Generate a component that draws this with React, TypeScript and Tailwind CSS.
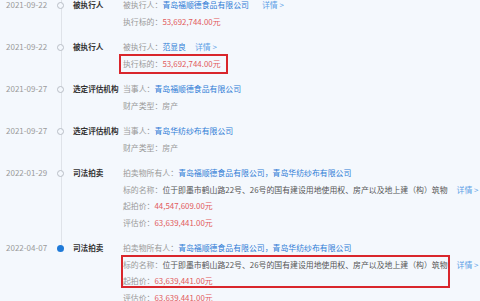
import React from "react";

type Line = React.ReactNode;

const L = ({ children }: { children: React.ReactNode }) => (
  <span className="text-[#9a9a9a]">{children}</span>
);
const B = ({ children }: { children: React.ReactNode }) => (
  <span className="text-[#2f7cd6]">{children}</span>
);
const R = ({ children }: { children: React.ReactNode }) => (
  <span className="text-[#e25a5c]">{children}</span>
);
const D = ({ wide }: { wide?: boolean }) => (
  <span className={wide ? "ml-[13px] text-[#5d9fe6]" : "ml-[9px] text-[#5d9fe6]"}>详情 &gt;</span>
);

type Item = {
  date: string;
  title: string;
  lines: Line[];
  active?: boolean;
  box?: "one" | "two";
};

const items: Item[] = [
  {
    date: "2021-09-22",
    title: "被执行人",
    lines: [
      <>
        <L>被执行人：</L>
        <B>青岛福顺德食品有限公司</B>
        <D wide />
      </>,
      <>
        <L>执行标的：</L>
        <R>53,692,744.00元</R>
      </>,
    ],
  },
  {
    date: "2021-09-22",
    title: "被执行人",
    box: "one",
    lines: [
      <>
        <L>被执行人：</L>
        <B>范显良</B>
        <D />
      </>,
      <>
        <L>执行标的：</L>
        <R>53,692,744.00元</R>
      </>,
    ],
  },
  {
    date: "2021-09-27",
    title: "选定评估机构",
    lines: [
      <>
        <L>当事人：</L>
        <B>青岛福顺德食品有限公司</B>
      </>,
      <L>财产类型：房产</L>,
    ],
  },
  {
    date: "2021-09-27",
    title: "选定评估机构",
    lines: [
      <>
        <L>当事人：</L>
        <B>青岛华纺纱布有限公司</B>
      </>,
      <L>财产类型：房产</L>,
    ],
  },
  {
    date: "2022-01-29",
    title: "司法拍卖",
    lines: [
      <>
        <L>拍卖物所有人：</L>
        <B>青岛福顺德食品有限公司，青岛华纺纱布有限公司</B>
      </>,
      <>
        <L>标的名称：</L>
        <span className="text-[#555]">
          位于即墨市鹤山路22号、26号的国有建设用地使用权、房产以及地上建（构）筑物
        </span>
        <D />
      </>,
      <>
        <L>起拍价：</L>
        <R>44,547,609.00元</R>
      </>,
      <>
        <L>评估价：</L>
        <R>63,639,441.00元</R>
      </>,
    ],
  },
  {
    date: "2022-04-07",
    title: "司法拍卖",
    active: true,
    box: "two",
    lines: [
      <>
        <L>拍卖物所有人：</L>
        <B>青岛福顺德食品有限公司，青岛华纺纱布有限公司</B>
      </>,
      <>
        <L>标的名称：</L>
        <span className="text-[#555]">
          位于即墨市鹤山路22号、26号的国有建设用地使用权、房产以及地上建（构）筑物
        </span>
        <D />
      </>,
      <>
        <L>起拍价：</L>
        <R>63,639,441.00元</R>
      </>,
      <>
        <L>评估价：</L>
        <R>63,639,441.00元</R>
      </>,
    ],
  },
];

export default function App() {
  return (
    <div className="w-[480px] h-[301px] overflow-hidden bg-[#f4f8fd] font-['Noto_Sans_CJK_SC','Noto_Sans',sans-serif] text-[8px] leading-[16.5px]">
      <div className="mt-[-3px] flex flex-col gap-[9px]">
        {items.map((it, i) => {
          const last = i === items.length - 1;
          return (
            <div key={i} className="flex">
              <div className="w-[57px] shrink-0 pl-[6px] text-[#9a9a9a]">{it.date}</div>
              <div className="relative w-[8px] shrink-0">
                <div
                  className={
                    last
                      ? "absolute left-[3.5px] top-0 h-[8px] w-px bg-[#dfe3e9]"
                      : "absolute left-[3.5px] top-0 bottom-[-9px] w-px bg-[#dfe3e9]"
                  }
                />
                {it.active ? (
                  <div className="relative mt-[5px] h-[7px] w-[7px] rounded-full bg-[#1f7ad8]" />
                ) : (
                  <div className="relative mt-[5px] h-[7px] w-[7px] rounded-full border border-[#b9bec6] bg-[#f4f8fd]" />
                )}
              </div>
              <div className="ml-[8px] w-[50px] shrink-0 whitespace-nowrap text-[7.6px] font-bold text-[#333]">
                {it.title}
              </div>
              <div className="relative flex-1 whitespace-nowrap text-[7.88px]">
                {it.lines.map((ln, j) => (
                  <div key={j}>
                    {it.box === "one" && j === 1 ? (
                      <span className="relative inline-block">
                        {ln}
                        <span className="absolute left-[-4px] right-[-7px] top-[-2px] bottom-[-2px] border-2 border-[#d9262c]" />
                      </span>
                    ) : (
                      ln
                    )}
                  </div>
                ))}
                {it.box === "two" && (
                  <div className="absolute left-[-2px] top-[15px] h-[33px] w-[329px] border-2 border-[#d9262c]" />
                )}
              </div>
            </div>
          );
        })}
      </div>
    </div>
  );
}
